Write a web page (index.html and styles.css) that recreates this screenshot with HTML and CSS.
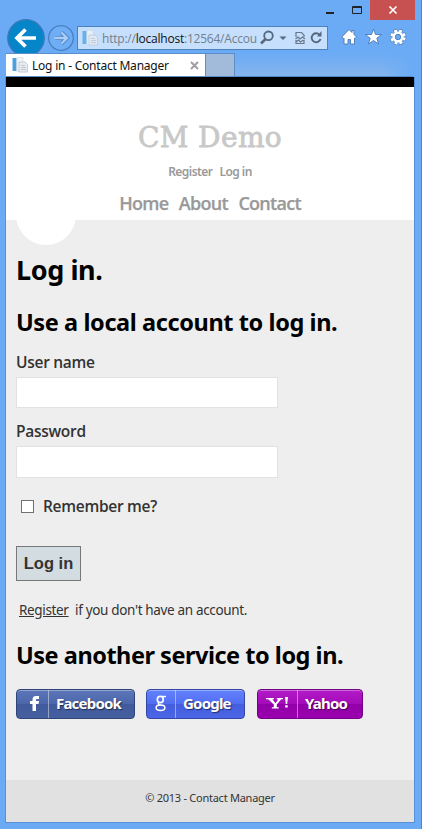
FILE: index.html
```html
<!DOCTYPE html>
<html lang="en">
<head>
<meta charset="utf-8">
<title>Log in - Contact Manager</title>
<link rel="stylesheet" href="styles.css">
</head>
<body>
<div class="window">
  <div class="titlebar">
    <svg class="win-icons" width="44" height="20" viewBox="0 0 44 20"><path d="M0 12h8v2H0z" fill="#222"/><path d="M26.500 6.500h9v7h-9zM26 7.500h10" fill="none" stroke="#222"/></svg>
    <div class="win-close"><svg width="10" height="10" viewBox="0 0 10 10"><path d="M1.500 1.500l7 7M8.500 1.500l-7 7" stroke="#fff" stroke-width="1.700"/></svg></div>
  </div>
  <div class="toolbar">
    <svg class="history" width="72" height="40" viewBox="0 0 72 40">
      <circle cx="20" cy="20" r="18.300" fill="#0785c9" stroke="#3f79b8" stroke-width="1.200"/>
      <path d="M11 20h19M19.500 11.500L11 20l8.500 8.500" fill="none" stroke="#fff" stroke-width="3.700"/>
      <circle cx="55" cy="20" r="12.300" fill="#6fadf5" stroke="#4a7fc2" stroke-width="1.300"/>
      <path d="M49 20h12M55.500 14.500L61 20l-5.500 5.500" fill="none" stroke="#4d82c4" stroke-width="4"/>
      <path d="M48.500 20H61M55.500 14.500L61 20l-5.500 5.500" fill="none" stroke="#a9cdf7" stroke-width="2.300"/>
    </svg>
    <div class="address">
      <svg class="favicon" width="16" height="16" viewBox="0 0 16 16"><path d="M.5 1h4v13h-4z" fill="#4e9fe0"/><path d="M5 .5h6v14H5z" fill="#f2f5f8" stroke="#d0d8e0" stroke-width=".6"/><path d="M7 5h6l2.500 2.500V15H7z" fill="#e9edf1" stroke="#b9c3ce" stroke-width=".8"/><path d="M9 8.500h4M9 10.500h5M9 12.500h5" stroke="#aab6c3" stroke-width=".7"/></svg>
      <span class="url">http://<b>localhost</b>:12564/Accou</span>
      <svg class="address-icons" width="64" height="16" viewBox="0 0 64 16">
        <circle cx="8.500" cy="5.800" r="4.300" fill="none" stroke="#56687e" stroke-width="1.800"/><path d="M5.500 9L1 13.500" stroke="#56687e" stroke-width="2.500"/>
        <path d="M19.500 6.500h7L23 10z" fill="#56687e"/>
        <path d="M36 7V2.500h5.500L44 5v2M36 10v3.500h8V10M35.500 9l2.500-2 2 2 2.500-2L45 9M36 12l2.500-2 2 2 3-2" fill="none" stroke="#66788c" stroke-width="1.200"/>
        <path d="M59.500 4.700A4.500 4.500 0 1 0 60.500 9" fill="none" stroke="#56687e" stroke-width="1.900"/><path d="M57 6.500h4.500V1z" fill="#56687e"/>
      </svg>
    </div>
    <svg class="commands" width="66" height="18" viewBox="0 0 66 18">
      <path d="M8 1.500L.8 9l1.500 1.500L3 10v6h4v-4.500h2.500V16h4v-6l.7.500L15.500 9l-2.500-2.500V2.500h-2v2z" fill="#fff" stroke="#4878b4" stroke-width=".9"/>
      <path d="M32.500 1l2 5.500h6l-4.700 3.700 1.800 5.800-5.100-3.500-5.100 3.500 1.800-5.800-4.700-3.700h6z" fill="#fff" stroke="#4878b4" stroke-width=".9"/>
      <circle cx="57" cy="9" r="6.300" fill="none" stroke="#4878b4" stroke-width="4" stroke-dasharray="3.500 1.450"/>
      <circle cx="57" cy="9" r="6.300" fill="none" stroke="#fff" stroke-width="2.800" stroke-dasharray="2.800 2.150" stroke-dashoffset="-.35"/>
      <circle cx="57" cy="9" r="4.300" fill="none" stroke="#fff" stroke-width="2.600"/><circle cx="57" cy="9" r="2.600" fill="#6cabf4" stroke="#4878b4" stroke-width=".8"/>
    </svg>
  </div>
  <div class="tabs">
    <div class="tab">
      <svg class="favicon" width="16" height="16" viewBox="0 0 16 16"><path d="M.5 1h4v13h-4z" fill="#4e9fe0"/><path d="M5 .5h6v14H5z" fill="#f2f5f8" stroke="#d0d8e0" stroke-width=".6"/><path d="M7 5h6l2.500 2.500V15H7z" fill="#e9edf1" stroke="#b9c3ce" stroke-width=".8"/><path d="M9 8.500h4M9 10.500h5M9 12.500h5" stroke="#aab6c3" stroke-width=".7"/></svg>
      <span class="tab-title">Log in - Contact Manager</span>
      <svg class="tab-close" width="9" height="9" viewBox="0 0 9 9"><path d="M1 1l7 7M8 1L1 8" stroke="#a0a0a0" stroke-width="2"/></svg>
    </div>
    <div class="new-tab"></div>
    <div class="tab-rest"></div>
  </div>
  <div class="page">
    <header class="header">
      <div class="brand">CM Demo</div>
      <div class="account"><span>Register</span><span>Log in</span></div>
      <nav class="nav"><span>Home</span><span>About</span><span>Contact</span></nav>
      <div class="bump"></div>
    </header>
    <main class="content">
      <h1>Log in.</h1>
      <h2 class="local">Use a local account to log in.</h2>
      <label class="label user">User name</label>
      <input class="field" type="text">
      <label class="label pass">Password</label>
      <input class="field second" type="password">
      <div class="remember"><span class="box"></span><span class="label remember-text">Remember me?</span></div>
      <button class="submit">Log in</button>
      <p class="hint"><u>Register</u><span>if you don't have an account.</span></p>
      <h2 class="service">Use another service to log in.</h2>
      <div class="providers">
        <div class="provider facebook"><div class="logo"><svg width="31" height="28" viewBox="0 0 31 28"><path d="M15.500 21v-7H13v-3h2.500V9.500c0-2.500 1.500-3.500 3.500-3.500h3v3h-1.700c-1 0-1.300.4-1.300 1.200V11h3l-.5 3H19v7z" fill="#fff"/></svg></div><span>Facebook</span></div>
        <div class="provider google"><div class="logo"><svg width="28" height="28" viewBox="0 0 28 28"><g fill="none" stroke="#fff"><ellipse cx="13.300" cy="9.500" rx="3" ry="3.100" stroke-width="1.700"/><path d="M14.500 6.500h4.500" stroke-width="1.400"/><path d="M12 12.500c-1.500 1.700-.5 2.400 1.500 2.700" stroke-width="1.500"/><ellipse cx="13.500" cy="17.800" rx="4.400" ry="2.700" stroke-width="1.500"/></g></svg></div><span>Google</span></div>
        <div class="provider yahoo"><div class="logo"><svg width="39" height="28" viewBox="0 0 39 28"><path d="M8 8h8v1.200h-1.600l3.100 4 2.800-3.700h-1.500V8H25v1.300h-1.800l-4.400 5.200v2.700h2v1.300h-7v-1.300h2v-2.700L10.200 9.200H8zM27 7h3l-.8 7h-1.400zM27.200 15.200h2.500v2.200h-2.500z" fill="#fff"/></svg></div><span>Yahoo</span></div>
      </div>
    </main>
    <footer class="footer"><span>© 2013 - Contact Manager</span></footer>
  </div>
</div>
</body>
</html>
```
FILE: styles.css
```css
* { box-sizing: border-box; }
body { margin: 0; font-family: "Noto Sans", "Open Sans", sans-serif; color: #333; }
.window { width: 422px; height: 829px; background: #6babf5; border-right: 1px solid #4b86cf; display: flex; flex-direction: column; overflow: hidden; }
span, u, h1, h2, label { white-space: nowrap; }
svg { display: block; flex: none; }

.titlebar { height: 20px; display: flex; justify-content: flex-end; padding-right: 6px; }
.win-close { width: 45px; height: 20px; background: #c75050; display: flex; align-items: center; justify-content: center; }
.toolbar { height: 33px; display: flex; padding-left: 6px; }
.history { margin: -2px -1px 0 0; }
.address { width: 251px; height: 24px; margin-top: 6px; border: 1px solid #4f82bd; background: #c6dffc; display: flex; align-items: center; padding-left: 4px; }
.address .favicon { opacity: .75; }
.url { font-family: "Open Sans", sans-serif; font-size: 12px; letter-spacing: -.22px; color: #72808f; width: 156px; margin-left: 4px; }
.url b { font-weight: 400; color: #111; }
.address-icons { margin-left: 2px; }
.commands { margin: 8px 0 0 13px; }

.tabs { height: 24px; display: flex; padding: 0 8px 0 6px; position: relative; }
.tab { width: 200px; background: #fff; border: 1px solid #5c8fc9; border-left: 0; display: flex; align-items: center; padding-left: 6px; }
.tab-title { font-size: 12px; letter-spacing: -.22px; color: #111; width: 158px; margin-left: 4px; }
.new-tab { width: 29px; background: #a3bbda; border: 1px solid #5c8fc9; border-left: 0; }
.tab-rest { flex: 1; background: linear-gradient(90deg, #6babf500 82%, #6babf5), linear-gradient(#6babf5, #85b5ee); border-bottom: 1px solid #5189c8; }

.page { width: 410px; height: 746px; margin-left: 5px; border: 1px solid #5691d6; border-top: 0; background: #eee; display: flex; flex-direction: column; }
.header { height: 143px; border-top: 10px solid #000; background: #fff; display: flex; flex-direction: column; align-items: center; position: relative; }
.brand { margin-top: 31px; height: 40px; font: 28px/40px "DejaVu Serif", serif; letter-spacing: .4px; color: #c8c8c8; -webkit-text-stroke: .8px #c8c8c8; white-space: nowrap; }
.account { display: flex; gap: 7px; margin-top: 4px; font-size: 12px; line-height: 20px; font-weight: 600; color: #999; letter-spacing: -.55px; }
.nav { display: flex; gap: 10.5px; margin-top: 8px; font: 600 18px/26px "Open Sans", sans-serif; color: #999; letter-spacing: -.72px; -webkit-text-stroke: .25px #999; }
.bump { position: absolute; left: 10px; top: 98px; width: 60px; height: 60px; border-radius: 50%; background: #fff; }

.content { height: 560px; padding: 32px 10px 0; display: flex; flex-direction: column; align-items: flex-start; }
h1, h2, p { margin: 0; }
h1 { font-size: 27px; line-height: 36px; color: #000; letter-spacing: -.4px; }
h2 { font-size: 23.500px; line-height: 32px; color: #000; letter-spacing: -.4px; }
.local { margin-top: 18px; }
.label { font: 600 15.500px/22px "Open Sans", sans-serif; letter-spacing: -.28px; }
.user { margin-top: 13px; }
.field { width: 262px; height: 31px; margin: 4px 0 0; border: 1px solid #e2e2e2; background: #fff; padding: 5px; }
.pass { margin-top: 12px; }
.second { height: 32px; }
.remember { display: flex; align-items: center; height: 22px; margin-top: 17px; padding-left: 5px; }
.box { width: 13px; height: 13px; border: 1px solid #707070; background: #fff; margin-right: 9px; }
.submit { width: 65px; height: 35px; margin: 29px 0 0; padding: 0; border: 1px solid #787878; border-radius: 0; background: #d3dce0; color: #333; font: bold 16.500px/33px "Liberation Sans", sans-serif; }
.hint { display: flex; gap: 6.500px; padding-left: 3px; margin-top: 19px; font-size: 13.500px; line-height: 20px; letter-spacing: -.34px; }
.service { margin-top: 19px; letter-spacing: -.48px; }
.providers { display: flex; margin-top: 18px; }
.provider { height: 30px; display: flex; border: 1px solid #2f4577; border-radius: 4px; color: #fff; font: bold 15px/27px "Noto Sans", sans-serif; letter-spacing: -.8px; text-shadow: 1px 1px 1px #0008; box-shadow: inset 0 1px 0 #fff5; }
.logo { border-right: 1px solid #ffffff70; margin-right: 7px; }
.facebook { width: 119px; background: linear-gradient(#5c76b9, #4b66aa 50%, #415a9c 50%, #465f9f); }
.google { width: 99px; margin-left: 11px; border-color: #3347a4; background: linear-gradient(#6382ff, #506df0 50%, #435ddd 50%, #4b66e6); }
.yahoo { width: 106px; margin-left: 12px; border-color: #730087; background: linear-gradient(#b31bc8, #a20bb7 50%, #9200a8 50%, #9a00ae); }
.footer { flex: 1; background: #e1e1e1; display: flex; justify-content: center; padding-top: 9px; font-size: 11px; line-height: 18px; letter-spacing: -.25px; }
```
